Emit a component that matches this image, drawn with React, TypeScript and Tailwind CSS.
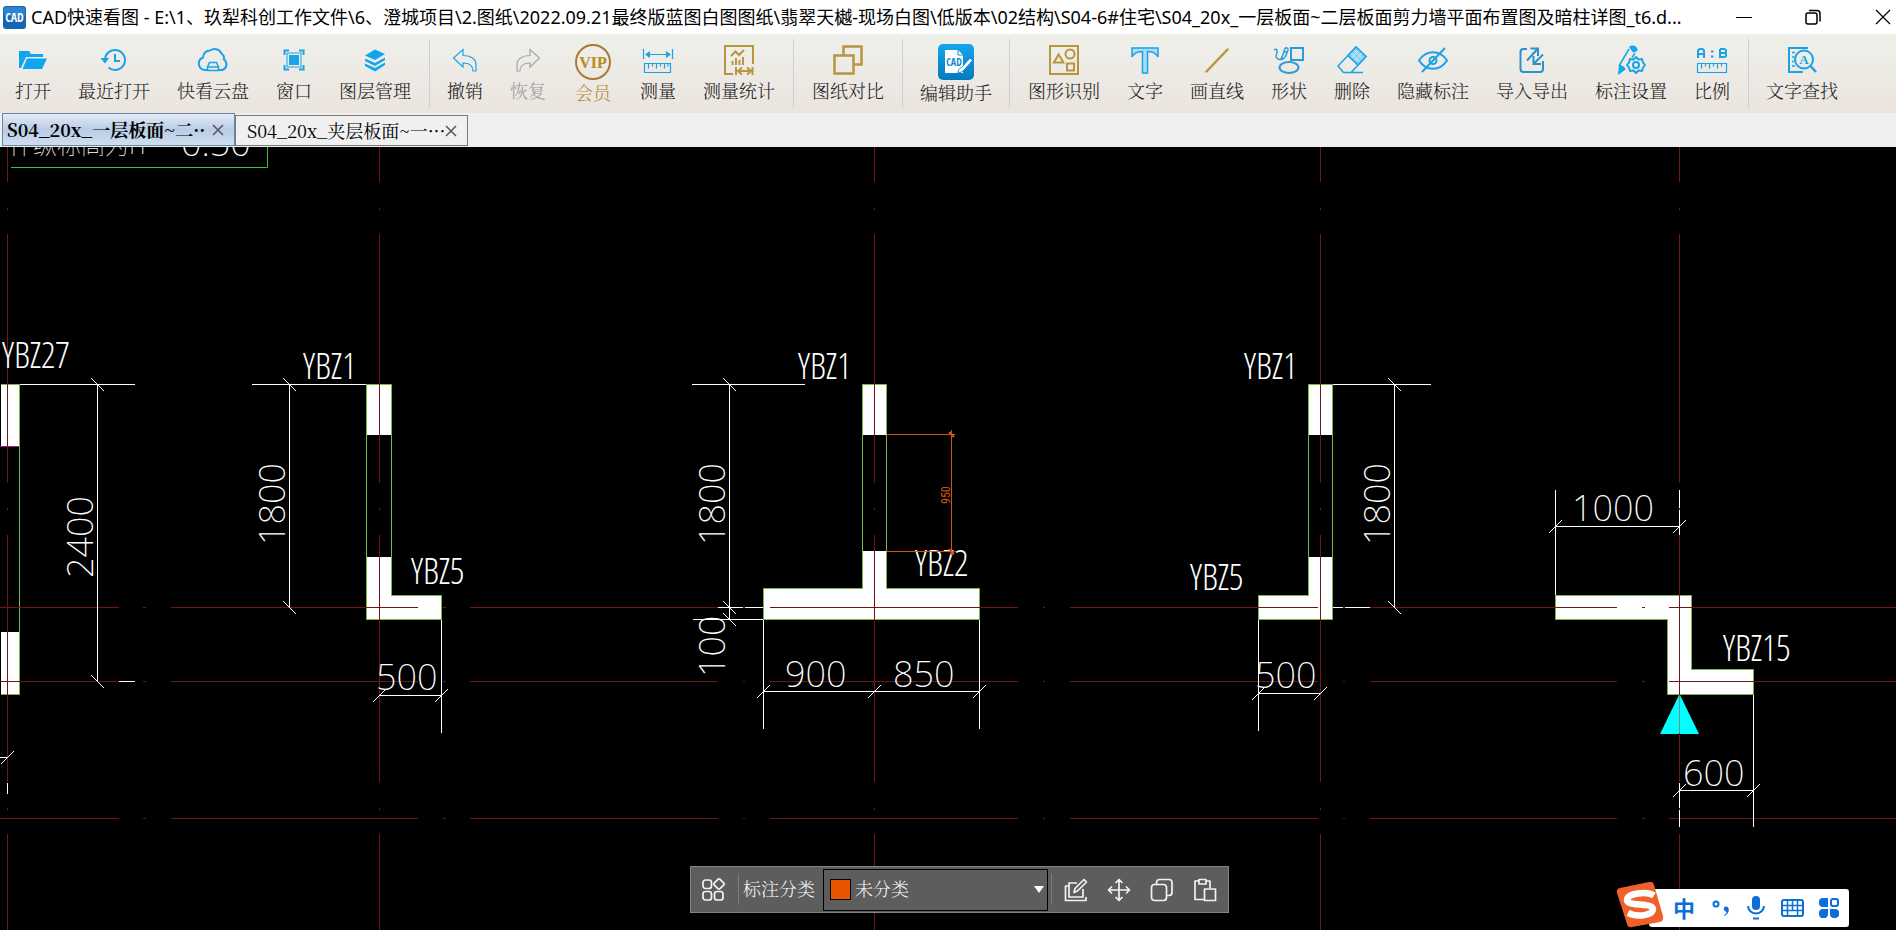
import type { ReactNode } from 'react';

type Tool = {
  label: string;
  icon: ReactNode;
  big?: boolean;
  tone?: string;
};

const BLUE = '#1aa3e8';
const GOLD = '#b8953f';

const Icon = ({ children, color = BLUE }: { children: ReactNode; color?: string }) => (
  <svg
    width="30"
    height="30"
    viewBox="0 0 30 30"
    fill="none"
    stroke={color}
    strokeWidth="1.5"
    className="shrink-0 overflow-visible"
    aria-hidden="true"
  >
    {children}
  </svg>
);

const fileTools: Tool[] = [
  {
    label: '打开',
    icon: (
      <Icon>
        <path d="M1 23V6h10l2 3h12v3H8L3 23z" fill="#0fa5f0" stroke="none" />
        <path d="M9 13.5h20L24 24H4.5z" fill="#0fa5f0" stroke="none" />
      </Icon>
    ),
  },
  {
    label: '最近打开',
    icon: (
      <Icon>
        <path d="M6 15a10 10 0 1 1 3.5 7.6M16 9v7h5" strokeWidth="2" />
        <path d="M1.5 13h8.5l-4 5.5z" fill={BLUE} stroke="none" />
      </Icon>
    ),
  },
  {
    label: '快看云盘',
    icon: (
      <Icon>
        <path
          d="M9 25H6.5a6.5 6.5 0 0 1-1.5-12.5A7 7 0 0 1 12 5.5a7.5 7.5 0 0 1 11.5 3 6 6 0 0 1 2.5 6A6 6 0 0 1 24.5 25H21"
          strokeWidth="2"
        />
        <path d="M11.5 17.5h7l2 4.5v3.5h-11V22zM9.5 22h11" />
      </Icon>
    ),
  },
  {
    label: '窗口',
    icon: (
      <Icon>
        <path d="M5.5 10V5.5H10M20 5.5h4.5V10M24.5 20v4.5H20M10 24.5H5.5V20" strokeWidth="2" />
        <rect x="8" y="8" width="14" height="14" strokeWidth="1" />
        <rect x="10" y="10" width="10" height="10" fill={BLUE} stroke="none" />
      </Icon>
    ),
  },
  {
    label: '图层管理',
    icon: (
      <Icon>
        <g fill="#0fa5f0" stroke="none">
          <path d="M15 4.5 25 9 15 15 5 10.5z" />
          <path d="M5 13.5l10 4.5 10-5.5v2.5l-10 6-10-5z" />
          <path d="M5 18.5l10 4.5 10-5.5V20l-10 6.5L5 21z" />
        </g>
      </Icon>
    ),
  },
];

const editTools: Tool[] = [
  {
    label: '撤销',
    icon: (
      <Icon>
        <path d="M13 4.5v6c8 0 13 3.500 13 9v6.5h-3c0-6-3.500-8-10-8v4L3.500 13z" strokeWidth="1.2" />
      </Icon>
    ),
  },
  {
    label: '恢复',
    tone: 'text-[#9b9b99]',
    icon: (
      <Icon color="#a6a6a4">
        <path d="M17 4.5v6c-8 0-13 3.500-13 9v6.5h3c0-6 3.500-8 10-8v4l9.500-9z" strokeWidth="1.2" />
      </Icon>
    ),
  },
  {
    label: '会员',
    big: true,
    tone: 'text-[#b58a35]',
    icon: (
      <svg width="36" height="36" viewBox="0 0 36 36" className="shrink-0 overflow-visible" aria-hidden="true">
        <circle cx="18" cy="18" r="17" fill="none" stroke="#a87a32" strokeWidth="2" />
        <text
          x="18"
          y="24"
          textAnchor="middle"
          fill="#b98a12"
          className="font-['Liberation_Serif',serif] text-[16px] font-bold"
        >
          VIP
        </text>
      </svg>
    ),
  },
  {
    label: '测量',
    icon: (
      <Icon>
        <path
          d="M.5 4v10M29.5 4v10M3 9.5h24M1.500 18.5h26v9h-26zM5.500 18.5v5M9.500 18.5v3M13.500 18.5v5M17.500 18.5v3M21.500 18.5v5M25 18.5v3"
          strokeWidth="1.2"
        />
        <path d="M2 9.5 7 6v7zM28 9.5 23 6v7z" fill={BLUE} stroke="none" />
      </Icon>
    ),
  },
  {
    label: '测量统计',
    icon: (
      <Icon color={GOLD}>
        <path d="M9 29H1V1h28v18" strokeWidth="2" />
        <path
          d="M7 11l4.5-4.5L15 10l5-5M8.5 20v-4M12 20v-7M15.5 20v-5M19 20v-8M12 22v8M28.5 22v8M14 26h13M18 22.5 14 26l4 3.5M23 22.5l4 3.5-4 3.5"
          strokeWidth="2"
        />
      </Icon>
    ),
  },
];

const compareTools: Tool[] = [
  {
    label: '图纸对比',
    icon: (
      <Icon color={GOLD}>
        <path d="M10.5 10V1.5h18v18H21M1.5 10.5h19v18h-19z" strokeWidth="2.5" />
      </Icon>
    ),
  },
];

const assistTools: Tool[] = [
  {
    label: '编辑助手',
    big: true,
    icon: (
      <svg width="36" height="36" viewBox="0 0 36 36" className="shrink-0" aria-hidden="true">
        <defs>
          <linearGradient id="assist" x1="0" y1="0" x2="0" y2="1">
            <stop offset="0" stopColor="#13a6ee" />
            <stop offset="1" stopColor="#0679bf" />
          </linearGradient>
        </defs>
        <rect width="36" height="36" rx="5" fill="url(#assist)" />
        <path d="M7 6h13l5 5v18H7z" fill="#fff" />
        <path d="M20 6v5h5" fill="none" stroke="#1295da" />
        <path d="M20 29c0-4 2-4.5 4-6l8-9 2.5 2.5-8 9c-2 2-3.500 3-6.5 3.5z" fill="#fff" stroke="#1189cf" />
        <text
          x="16"
          y="22"
          textAnchor="middle"
          fill="#0f86cc"
          className="font-['Open_Sans_Condensed','Roboto_Condensed',sans-serif] text-[10px] font-bold"
        >
          CAD
        </text>
      </svg>
    ),
  },
];

const drawTools: Tool[] = [
  {
    label: '图形识别',
    icon: (
      <Icon color={GOLD}>
        <path d="M1 1h28v28H1z" strokeWidth="2" />
        <path d="M9.5 9.5 5 17.5h9.5zM18 18.5h7v7h-7z" strokeWidth="2" />
        <circle cx="21" cy="9" r="4.5" strokeWidth="2" />
      </Icon>
    ),
  },
  {
    label: '文字',
    icon: (
      <Icon>
        <path d="M2 3h26v9c-2-4-5-5.5-10.5-5.5V28h-5V6.5C7 6.500 4 8 2 12z" fill="#a9def8" />
      </Icon>
    ),
  },
  {
    label: '画直线',
    icon: (
      <Icon color={GOLD}>
        <path d="M4.5 26.5 25.5 4.5" strokeWidth="2.5" strokeLinecap="round" />
      </Icon>
    ),
  },
  {
    label: '形状',
    icon: (
      <Icon color="#2c9cd6">
        <path d="M17 3h12v12H17z" strokeWidth="2" />
        <ellipse cx="15" cy="22.5" rx="9.5" ry="5.5" strokeWidth="2" />
        <path d="M0 5c3-2 4 1 2.500 4S3 14 5 14.500s3-1.500 3.500-3.500L11 3.500c1-1.500 3.500-.5 3 1.500l-2.500 6.500c-1 2-2.500 2.500-4 3M10 6.500l3 1" />
      </Icon>
    ),
  },
  {
    label: '删除',
    icon: (
      <Icon>
        <path d="M19 2 29 11.5 14 27.5H6.500L1 21zM11 10.5 21 20M12 27.5h14" />
        <path d="M19 2 29 11.5 21 20 11 10.5z" fill="#8ad3f5" stroke="none" />
        <path d="M17 5l9.5 9.5M14 8l9.5 9.5M22 5l-8 8.5M25 8l-8 8.5" stroke="#e4f4fb" strokeWidth=".7" />
        <path d="M19 2 29 11.5 21 20 11 10.5z" />
      </Icon>
    ),
  },
  {
    label: '隐藏标注',
    icon: (
      <Icon>
        <path d="M1 15.5C8 4.5 22 4.5 29 15.5 22 26.5 8 26.5 1 15.5z" strokeWidth="2" />
        <circle cx="15" cy="15.5" r="3.5" strokeWidth="2" />
        <path d="M27 3 4 27" strokeWidth="2" />
      </Icon>
    ),
  },
  {
    label: '导入导出',
    icon: (
      <Icon color="#2b93cc">
        <path d="M10 4H6.500A3 3 0 0 0 3.500 7v17a3 3 0 0 0 3 3H23a3 3 0 0 0 3-3v-8" strokeWidth="2" />
        <path d="M10 15.5 20.5 4M13.5 3.500h7.500v7.500M26 9.500l-9 9M16.500 11v8h7.500" strokeWidth="2" />
      </Icon>
    ),
  },
  {
    label: '标注设置',
    icon: (
      <Icon>
        <path d="M13 2c3-3 9-1 8.5 4l-4.5 1.500z" fill="#0fa5f0" stroke="none" />
        <path d="M13 4 3 21M19 8l-3 4.5" />
        <path d="M3 20c3 0 6 2 6.500 4.500L2 30z" fill="#0fa5f0" stroke="none" />
        <path
          d="M20 12l2.500 2.500 3.500-.5 1 3.500 2 2.500-2 2.500-1 3.500-3.500-.5L20 28l-2.500-2.500-3.500.5-1-3.500-2-2.500 2-2.500 1-3.500 3.500.5z"
          strokeWidth="2"
          strokeLinejoin="round"
        />
        <circle cx="20" cy="20" r="3" strokeWidth="2" />
      </Icon>
    ),
  },
  {
    label: '比例',
    icon: (
      <Icon>
        <path
          d="M1 13V5.5L2.500 4h3L7 5.500V13M1 9h6M23 4v8h4.500l1.500-1V9l-1-1 1-1V5l-1.500-1H23M23 8h5"
          strokeWidth="2"
        />
        <path d="M14 5.5h2.500v2H14zM14 10.5h2.500v2H14z" fill={BLUE} stroke="none" />
        <path
          d="M.5 18.5h29v9H.5zM4.500 18.5v5M8.500 18.5v3M12.500 18.5v5M16.500 18.5v3M20.500 18.5v5M24.500 18.5v3"
          strokeWidth="1.2"
        />
      </Icon>
    ),
  },
];

const searchTools: Tool[] = [
  {
    label: '文字查找',
    icon: (
      <Icon>
        <path d="M21 3H2v24h14" strokeWidth="2" />
        <path d="M5 7.5h3M5 12h2M5 16.5h2M5 21h3" />
        <circle cx="17" cy="14.5" r="9" strokeWidth="2" />
        <path d="M23.5 21 29 27" strokeWidth="2.5" />
        <text
          x="17"
          y="19"
          textAnchor="middle"
          fill={BLUE}
          stroke="none"
          className="font-['Liberation_Serif',serif] text-[13px] font-bold"
        >
          A
        </text>
      </Icon>
    ),
  },
];

function ToolButton({ label, icon, big, tone = 'text-[#202020]' }: Tool) {
  return (
    <button
      type="button"
      className={`flex flex-col items-center whitespace-nowrap text-[18px] leading-[22px] font-light ${
        big ? 'min-w-10 gap-px pt-[10px]' : 'gap-1 pt-[11px]'
      } ${tone}`}
    >
      {icon}
      <span>{label}</span>
    </button>
  );
}

const ToolGroup = ({ tools, className }: { tools: Tool[]; className: string }) => (
  <div className={`flex items-start gap-[27px] ${className}`}>
    {tools.map((tool) => (
      <ToolButton key={tool.label} {...tool} />
    ))}
  </div>
);

const ToolDivider = () => <div className="mt-[5px] h-[69px] w-px shrink-0 bg-[#cfcfce]" />;

function TitleBar() {
  return (
    <header className="flex h-[34px] shrink-0 items-center bg-white pl-[3px]">
      <svg width="23" height="23" viewBox="0 0 23 23" className="shrink-0" aria-hidden="true">
        <rect width="23" height="23" rx="3" fill="#1766b3" />
        <rect x="1" y="1" width="21" height="9" rx="2" fill="#2f84d0" />
        <text
          x="11.5"
          y="16"
          textAnchor="middle"
          fill="#fff"
          className="font-['Open_Sans_Condensed','Roboto_Condensed',sans-serif] text-[12px] font-bold"
        >
          CAD
        </text>
      </svg>
      <h1 className="ml-[5px] min-w-0 flex-1 truncate font-['Noto_Sans','Noto_Sans_CJK_SC',sans-serif] text-[18px] leading-[34px] text-black">
        CAD快速看图 - E:\1、玖犁科创工作文件\6、澄城项目\2.图纸\2022.09.21最终版蓝图白图图纸\翡翠天樾-现场白图\低版本\02结构\S04-6#住宅\S04_20x_一层板面~二层板面剪力墙平面布置图及暗柱详图_t6.d...
      </h1>
      <button type="button" aria-label="最小化" className="flex h-full w-[69px] items-center justify-center">
        <svg width="16" height="16" viewBox="0 0 16 16" stroke="#000" aria-hidden="true">
          <path d="M0 8.5h16" />
        </svg>
      </button>
      <button type="button" aria-label="还原" className="flex h-full w-[69px] items-center justify-center">
        <svg width="16" height="16" viewBox="0 0 16 16" fill="none" stroke="#000" strokeWidth="1.5" aria-hidden="true">
          <rect x="1" y="4" width="11" height="11" rx="2" />
          <path d="M4 1.5h8a3 3 0 0 1 3 3v8" />
        </svg>
      </button>
      <button type="button" aria-label="关闭" className="flex h-full w-[49px] items-center justify-end pr-[5px]">
        <svg width="16" height="16" viewBox="0 0 16 16" stroke="#000" strokeWidth="1.2" aria-hidden="true">
          <path d="M1 1l14 14M15 1 1 15" />
        </svg>
      </button>
    </header>
  );
}

const CloseMark = () => (
  <svg width="12" height="12" viewBox="0 0 12 12" stroke="#555" strokeWidth="1.5" aria-hidden="true">
    <path d="M1 1l10 10M11 1 1 11" />
  </svg>
);

function DocumentTabs() {
  return (
    <nav className="flex h-[34px] shrink-0 items-end bg-[#efefef] pb-px pl-[2px] text-[18px] leading-[22px] text-black">
      <div className="flex h-[33px] w-[233px] items-center justify-between border border-[#6a87ab] bg-linear-to-b from-[#e4ecf7] via-[#b9cce6] to-[#cfdff0] pr-[10px] pl-[4px]">
        <button type="button" className="pb-[2px] font-bold whitespace-nowrap">S04_20x_一层板面~二··</button>
        <button type="button" aria-label="关闭标签"><CloseMark /></button>
      </div>
      <div className="flex h-[31px] w-[233px] items-center justify-between border border-[#7b7b7b] bg-[#f0f0f0] pr-[10px] pl-[11px]">
        <button type="button" className="pb-[2px] whitespace-nowrap">S04_20x_夹层板面~一···</button>
        <button type="button" aria-label="关闭标签"><CloseMark /></button>
      </div>
    </nav>
  );
}

const gridX = [7.5, 379.5, 874.5, 1320.5, 1679.5];
const gridY = [607.5, 681.5, 818.5];

const dashesDown = 'v35m0 26v2m0 24v249m0 25v2m0 25v247m0 26v2m0 24v96';
const dashesAcross =
  'h119m24 0h3m25 0h247m25 0h3m24 0h248m25 0h2m25 0h248m25 0h2m25 0h248m25 0h2m25 0h247m25 0h3m24 0h600';

const walls = [
  { outline: 'M-5.5 384.5H19.5V694.5H-5.5z', gap: 'M-5 446H19V632H-5z' },
  { outline: 'M366.5 384.5H391.5V595.5H441.5V619.5H366.5z', gap: 'M367 435H391V557H367z' },
  {
    outline: 'M862.5 384.5H886.5V588.5H979.5V619.5H763.5V588.5H862.5z',
    gap: 'M863 435H886V551H863z',
  },
  { outline: 'M1308.5 384.5H1332.5V619.5H1258.5V595.5H1308.5z', gap: 'M1309 435H1332V557H1309z' },
  { outline: 'M1555.5 595.5H1691.5V669.5H1753.5V694.5H1667.5V619.5H1555.5z' },
];

const dimensionLines = [
  'M20 384.5H135M97.5 384V681M119 681.5H135M0 757.5H7M7.5 783V794',
  'M252 384.5H366M289.5 384V607M379 695.5H441M441.5 620V733',
  'M692 384.5H805M729.5 384V619M718 607.5H743M745 607.5H763M693 619.5H763',
  'M763.5 620V729M979.5 620V729M763 691.5H979',
  'M1333 384.5H1431M1394.5 384V607M1333 607.5H1343M1345 607.5H1370M1258.5 620V731M1258 693.5H1320',
  'M1555.5 490V595M1679.5 490V508M1679.5 510V535M1555 526.5H1679',
  'M1753.5 695V827M1679 790.5H1753M1679.5 783V808M1679.5 810V827',
];

// strokes across the end of vertical and horizontal dimensions
const verticalTicks = [
  [97, 384], [97, 681], [289, 384], [289, 607], [729, 384], [729, 607], [729, 619], [1394, 384], [1394, 607],
];
const horizontalTicks = [
  [7, 757], [379, 695], [441, 695], [763, 691], [874, 691], [979, 691],
  [1258, 693], [1320, 693], [1555, 526], [1679, 526], [1679, 790], [1753, 790],
];

const wallNames = [
  { text: 'YBZ27', x: 2, y: 368 },
  { text: 'YBZ1', x: 303, y: 379 },
  { text: 'YBZ5', x: 411, y: 584 },
  { text: 'YBZ1', x: 798, y: 379 },
  { text: 'YBZ2', x: 915, y: 576 },
  { text: 'YBZ1', x: 1244, y: 379 },
  { text: 'YBZ5', x: 1190, y: 590 },
  { text: 'YBZ15', x: 1723, y: 661 },
];

const sizes = [
  { text: '500', x: 376, y: 690 },
  { text: '900', x: 785, y: 687 },
  { text: '850', x: 893, y: 687 },
  { text: '500', x: 1255, y: 688 },
  { text: '1000', x: 1572, y: 521 },
  { text: '600', x: 1683, y: 786 },
];

const uprightSizes = [
  { text: '2400', x: 93, y: 578 },
  { text: '1800', x: 285, y: 545 },
  { text: '1800', x: 725, y: 545 },
  { text: '100', x: 725, y: 677 },
  { text: '1800', x: 1390, y: 545 },
];

function Drawing() {
  return (
    <svg
      className="block h-full w-full"
      viewBox="0 147 1896 783"
      preserveAspectRatio="xMinYMin slice"
      role="img"
      aria-label="剪力墙平面布置图"
    >
      <g fill="#fff" className="font-['Noto_Sans_CJK_SC',sans-serif] text-[24px] font-thin">
        <text x="9" y="154">件纵标高为H</text>
        <text x="181" y="156" className="font-['Noto_Sans',sans-serif] text-[36px] font-extralight">0.50</text>
      </g>
      <path d="M11 167.5H267.5V147" fill="none" stroke="#35c435" />

      {walls.map((wall) => (
        <g key={wall.outline}>
          <path d={wall.outline} fill="#fff" />
          {wall.gap && <path d={wall.gap} fill="#000" />}
          <path d={wall.outline} fill="none" stroke="#7db64a" />
        </g>
      ))}
      <path d="M0 446.5H19" stroke="#a0209c" />
      <path d="M.5 384V446M.5 632V695" stroke="#000" />
      <path d="M1679.5 694 1699 734H1660z" fill="#00ffff" />

      <g fill="none" stroke="#701414">
        {gridX.map((x) => (
          <path key={x} d={`M${x} 147${dashesDown}`} />
        ))}
        {gridY.map((y) => (
          <path key={y} d={`M0 ${y}${dashesAcross}`} />
        ))}
      </g>
      <path d="M1679.5 695V733" stroke="#6f8f8f" />

      <g fill="none" stroke="#fff">
        {dimensionLines.map((d) => (
          <path key={d} d={d} />
        ))}
        {verticalTicks.map(([x, y]) => (
          <path key={`${x}-${y}`} d={`M${x - 6} ${y - 6}l13 13`} />
        ))}
        {horizontalTicks.map(([x, y]) => (
          <path key={`${x}-${y}`} d={`M${x - 6} ${y + 7}l13 -13`} />
        ))}
      </g>

      <g fill="#fff" className="font-['Open_Sans_Condensed_Light','Roboto_Condensed',sans-serif] text-[36px]">
        {wallNames.map((name) => (
          <text key={`${name.text}-${name.x}`} x={name.x} y={name.y}>{name.text}</text>
        ))}
      </g>
      <g fill="#fff" className="font-['Noto_Sans',sans-serif] text-[36px] font-extralight">
        {sizes.map((size) => (
          <text key={size.x} x={size.x} y={size.y}>{size.text}</text>
        ))}
        {uprightSizes.map((size) => (
          <text key={`${size.x}-${size.y}`} transform={`translate(${size.x} ${size.y}) rotate(-90)`}>
            {size.text}
          </text>
        ))}
      </g>

      <g stroke="#d2560f" fill="none">
        <path d="M887 434.5H955M951.5 430V555M887 551.5H955" />
        <path d="M949 432l5 5M949 549l5 5" strokeWidth="2" />
      </g>
      <text
        transform="translate(950 504) rotate(-90)"
        fill="#d2560f"
        className="font-['Roboto_Condensed','Roboto',sans-serif] text-[12px]"
      >
        950
      </text>
    </svg>
  );
}

const BarIcon = ({ children }: { children: ReactNode }) => (
  <svg
    width="24"
    height="24"
    viewBox="0 0 24 24"
    fill="none"
    stroke="#f2f2f2"
    strokeWidth="1.7"
    strokeLinejoin="round"
    aria-hidden="true"
  >
    {children}
  </svg>
);

function AnnotationBar() {
  return (
    <div className="absolute bottom-[17px] left-[690px] flex h-[47px] w-[539px] items-center border border-[#858585] bg-[#5d5d5d] text-[18px] font-light text-[#f4f4f4]">
      <button type="button" aria-label="分类管理" className="ml-[10px]">
        <BarIcon>
          <rect x="2" y="2" width="8.5" height="8.5" rx="2.5" />
          <rect x="2" y="13.5" width="8.5" height="8.5" rx="2.5" />
          <rect x="13.5" y="13.5" width="8.5" height="8.5" rx="2.5" />
          <rect x="14" y="2" width="8" height="8" rx="1.5" transform="rotate(45 18 6)" />
        </BarIcon>
      </button>
      <div className="ml-[13px] h-[31px] w-px bg-[#7b7b7b]" />
      <label htmlFor="category" className="ml-[4px] pb-[2px] whitespace-nowrap">标注分类</label>
      <div className="ml-[8px] flex h-[42px] w-[225px] items-center border border-black pr-[3px] pl-[6px]">
        <span className="h-[21px] w-[21px] shrink-0 border border-black bg-[#e85400]" />
        <select
          id="category"
          className="h-full min-w-0 flex-1 appearance-none bg-transparent pb-[2px] pl-[4px] outline-none"
        >
          <option>未分类</option>
        </select>
        <svg width="10" height="7" viewBox="0 0 10 7" fill="#fff" aria-hidden="true">
          <path d="M0 0h10L5 7z" />
        </svg>
      </div>
      <div className="ml-[3px] h-[31px] w-px bg-[#7b7b7b]" />
      <div className="ml-[12px] flex gap-[19px]">
        <button type="button" aria-label="编辑">
          <BarIcon>
            <path d="M13 5H5v14h14v-8M5 8H1.500v14.500H22V19M10 14.500l1-4L20 1.500l2.500 2.500-9 9z" />
          </BarIcon>
        </button>
        <button type="button" aria-label="移动">
          <BarIcon>
            <path d="M12 2v20M2 12h20M8.500 5 12 1.500 15.500 5M8.500 19l3.500 3.500 3.500-3.500M5 8.500 1.500 12 5 15.500M19 8.500l3.500 3.500-3.500 3.500" />
          </BarIcon>
        </button>
        <button type="button" aria-label="复制">
          <BarIcon>
            <rect x="1.5" y="6.5" width="15" height="16" rx="3" />
            <path d="M6.500 6V4.500a3 3 0 0 1 3-3H19a3 3 0 0 1 3 3v10a3 3 0 0 1-3 3h-2" />
          </BarIcon>
        </button>
        <button type="button" aria-label="粘贴">
          <BarIcon>
            <path d="M6 3H2v18.500h9M13 3h4v7M6 1.500h7v4.500H6zM11.500 11h11v11.500h-11z" />
          </BarIcon>
        </button>
      </div>
    </div>
  );
}

const IME_BLUE = '#0b6fd8';

function InputMethodBar() {
  return (
    <div className="absolute right-[47px] bottom-[3px] flex h-[38px] w-[200px] items-center justify-between rounded-[3px] bg-white pr-[10px] pl-[23px]">
      <svg
        width="48"
        height="46"
        viewBox="0 0 48 46"
        className="absolute bottom-[-1px] left-[-33px]"
        aria-label="搜狗输入法"
      >
        <path d="M4 6 33 0q4-1 5 3l9 31q1 5-3 6l-28 5q-4 1-5-3L1 11Q0 7 4 6z" fill="#f0602a" />
        <path
          d="M38 13.5C31 9 11 11 11 18c0 7 25 2 26 9 0 6-15 9-25 4"
          fill="none"
          stroke="#fff"
          strokeWidth="6.5"
        />
      </svg>
      <button
        type="button"
        className="w-[24px] pb-[2px] text-center font-['Noto_Sans_CJK_SC',sans-serif] text-[22px] leading-none font-bold text-[#0b6fd8]"
      >
        中
      </button>
      <button type="button" aria-label="中文标点">
        <svg width="20" height="20" viewBox="0 0 20 20" fill="none" aria-hidden="true">
          <circle cx="5" cy="6" r="2.5" stroke={IME_BLUE} strokeWidth="2" />
          <path d="M13 17c2.500-1 3-2.500 2-3.500-3-.5-3-5 0-5 4 0 4 7-1.500 9.500z" fill={IME_BLUE} />
        </svg>
      </button>
      <button type="button" aria-label="语音">
        <svg width="20" height="24" viewBox="0 0 20 24" fill="none" aria-hidden="true">
          <rect x="6" y="0" width="8" height="14" rx="4" fill={IME_BLUE} />
          <path d="M2 10a8 7.500 0 0 0 16 0M7 22.500h6" stroke={IME_BLUE} strokeWidth="2" />
        </svg>
      </button>
      <button type="button" aria-label="软键盘">
        <svg width="23" height="18" viewBox="0 0 23 18" fill="none" stroke={IME_BLUE} aria-hidden="true">
          <rect x="1" y="1" width="21" height="16" rx="2" strokeWidth="2" />
          <path d="M2 6.500h19M2 11.500h19M6.500 2v10M11.500 2v10M16.500 2v10M6.500 12v4M16.500 12v4" strokeWidth="1.5" />
        </svg>
      </button>
      <button type="button" aria-label="工具箱">
        <svg width="20" height="20" viewBox="0 0 20 20" fill={IME_BLUE} aria-hidden="true">
          <path d="M4 0h5v9H4a4 4 0 0 1-4-4V4a4 4 0 0 1 4-4zM0 15a4 4 0 0 1 4-4h5v5a4 4 0 0 1-9 0zM11 11h5a4 4 0 0 1 0 9h-1a4 4 0 0 1-4-4z" />
          <rect x="12" y="1" width="7" height="7" rx="2" fill="none" stroke={IME_BLUE} strokeWidth="2" />
        </svg>
      </button>
    </div>
  );
}

export default function App() {
  return (
    <div className="flex h-screen flex-col overflow-hidden bg-black font-['Noto_Serif_CJK_SC','Noto_Sans_CJK_SC',serif]">
      <TitleBar />
      <div
        role="toolbar"
        aria-label="工具栏"
        className="flex h-[79px] shrink-0 items-start overflow-hidden bg-linear-to-b from-[#eff0ea] to-[#ebe4df]"
      >
        <ToolGroup tools={fileTools} className="pr-[18px] pl-[15px]" />
        <ToolDivider />
        <ToolGroup tools={editTools} className="pr-[18px] pl-[17px]" />
        <ToolDivider />
        <ToolGroup tools={compareTools} className="px-[18px]" />
        <ToolDivider />
        <ToolGroup tools={assistTools} className="px-[17px]" />
        <ToolDivider />
        <ToolGroup tools={drawTools} className="px-[18px]" />
        <ToolDivider />
        <ToolGroup tools={searchTools} className="px-[17px]" />
      </div>
      <DocumentTabs />
      <main className="relative min-h-0 flex-1">
        <Drawing />
        <AnnotationBar />
        <InputMethodBar />
      </main>
    </div>
  );
}
